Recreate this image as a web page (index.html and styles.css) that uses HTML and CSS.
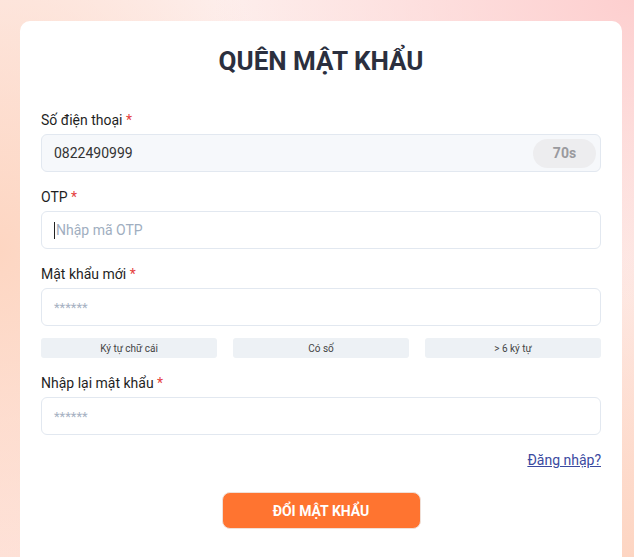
FILE: index.html
```html
<!DOCTYPE html>
<html lang="vi">
<head>
<meta charset="utf-8">
<title>Quên mật khẩu</title>
<link rel="stylesheet" href="styles.css">
</head>
<body>
<div class="page">
  <div class="card">
    <h1 class="title">QUÊN MẬT KHẨU</h1>
    <div class="field">
      <label class="label">Số điện thoại <span class="req">*</span></label>
      <div class="input input-disabled">
        <span class="value">0822490999</span>
        <span class="timer">70s</span>
      </div>
    </div>
    <div class="field">
      <label class="label">OTP <span class="req">*</span></label>
      <div class="input"><span class="caret"></span><span class="placeholder">Nhập mã OTP</span></div>
    </div>
    <div class="field">
      <label class="label">Mật khẩu mới <span class="req">*</span></label>
      <div class="input"><span class="placeholder stars">******</span></div>
      <div class="chips">
        <div class="chip">Ký tự chữ cái</div>
        <div class="chip">Có số</div>
        <div class="chip">&gt; 6 ký tự</div>
      </div>
    </div>
    <div class="field">
      <label class="label">Nhập lại mật khẩu <span class="req">*</span></label>
      <div class="input"><span class="placeholder stars">******</span></div>
    </div>
    <div class="link-row"><a class="link" href="#">Đăng nhập?</a></div>
    <div class="btn-row"><button class="btn">ĐỔI MẬT KHẨU</button></div>
  </div>
</div>
</body>
</html>
```
FILE: styles.css
```css
* { box-sizing: border-box; }
html, body { margin: 0; padding: 0; height: 100%; }
body {
  font-family: Roboto, "Noto Sans", Arial, sans-serif;
  overflow: hidden;
  background:
    radial-gradient(ellipse 420px 300px at 100% 0%, #fdcfcf 0%, rgba(253,207,207,0) 100%),
    radial-gradient(ellipse 300px 420px at 0% 45%, #fdd6c2 0%, rgba(253,214,194,0) 100%),
    radial-gradient(ellipse 300px 300px at 100% 100%, #fdd5c2 0%, rgba(253,213,194,0) 100%),
    linear-gradient(180deg, #fdefed 0%, #fee5df 100%);
}
.page {
  padding: 21px 12px 0 20px;
}
.card {
  background: #fff;
  border-radius: 10px 10px 0 0;
  padding: 22px 21px 40px 21px;
  min-height: 560px;
}
.title {
  margin: 0 0 31px;
  text-align: center;
  font-size: 26px;
  line-height: 36px;
  font-weight: 700;
  color: #2b2f3e;
  letter-spacing: 0;
}
.field { margin-bottom: 15px; }
.label {
  display: block;
  font-size: 14px;
  line-height: 20px;
  font-weight: 400;
  color: #1f1f1f;
  margin-bottom: 4px;
}
.req { color: #e53e3e; }
.input {
  height: 38px;
  border: 1px solid #e2e8f0;
  border-radius: 6px;
  background: #fff;
  display: flex;
  align-items: center;
  padding: 0 4px 0 12px;
  font-size: 14px;
  color: #333;
}
.input-disabled { background: #f6f8fb; }
.value { flex: 1; color: #333; }
.timer {
  width: 63px;
  height: 29px;
  border-radius: 15px;
  background: #ededef;
  color: #9a9a9e;
  font-weight: 700;
  font-size: 14px;
  display: flex;
  align-items: center;
  justify-content: center;
}
.placeholder { color: #a0aec0; }
.stars { font-size: 13px; letter-spacing: 0; color: #a6b1c2; }
.caret {
  display: inline-block;
  width: 1px;
  height: 17px;
  background: #222;
  margin-right: 1px;
}
.chips {
  display: grid;
  grid-template-columns: repeat(3, 1fr);
  gap: 16px;
  margin-top: 12px;
}
.chip {
  height: 20px;
  background: #edf1f5;
  border-radius: 3px;
  font-size: 10px;
  color: #444;
  display: flex;
  align-items: center;
  justify-content: center;
}
.link-row {
  display: flex;
  justify-content: flex-end;
  line-height: 20px;
}
.link {
  font-size: 14px;
  color: #3b4aa0;
  text-decoration: underline;
}
.btn-row {
  display: flex;
  justify-content: center;
  margin-top: 22px;
}
.btn {
  width: 199px;
  height: 37px;
  border: 1px solid #f0e0d8;
  border-radius: 8px;
  background: #ff7430;
  color: #fff;
  font-family: Roboto, Arial, sans-serif;
  font-size: 14px;
  font-weight: 700;
  cursor: pointer;
}
```
